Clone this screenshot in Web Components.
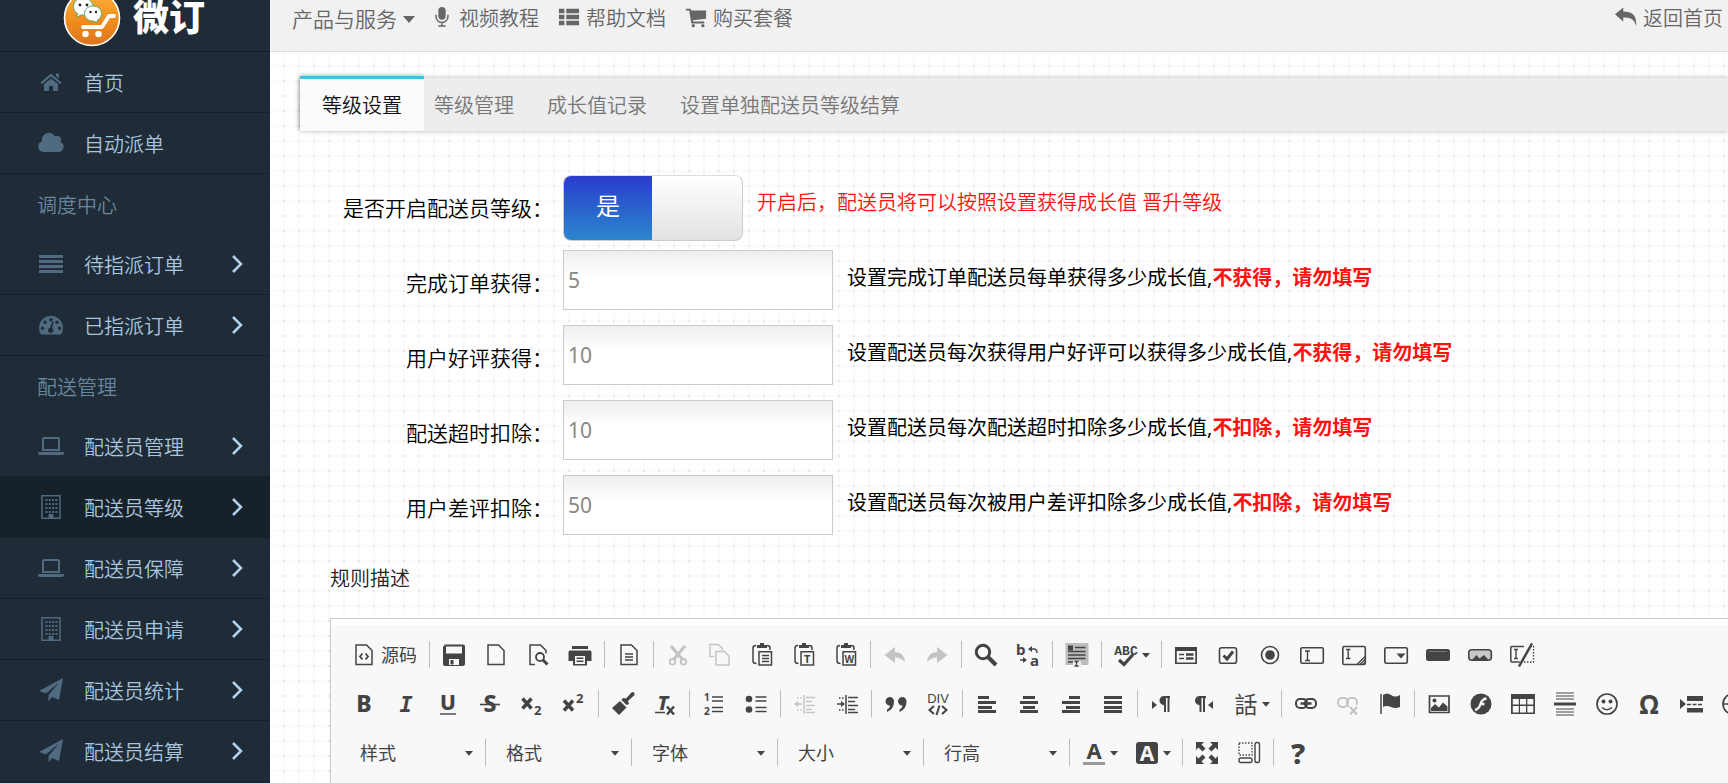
<!DOCTYPE html>
<html lang="zh-CN">
<head>
<meta charset="utf-8">
<meta name="viewport" content="width=device-width, initial-scale=1">
<title>微订 - 配送员等级</title>
<style>
  body {
    margin: 0;
    font-family: "Noto Sans", "Noto Sans CJK SC", sans-serif;
    font-size: 20px;
    font-weight: 350;
    overflow-x: hidden;
  }
</style>
</head>
<body>
<wd-app>
  <wd-sidebar slot="side">
    <wd-nav-item icon="home">首页</wd-nav-item>
    <wd-nav-item icon="cloud">自动派单</wd-nav-item>
    <wd-nav-title>调度中心</wd-nav-title>
    <wd-nav-item icon="bars" more>待指派订单</wd-nav-item>
    <wd-nav-item icon="gauge" more>已指派订单</wd-nav-item>
    <wd-nav-title>配送管理</wd-nav-title>
    <wd-nav-item icon="laptop" more>配送员管理</wd-nav-item>
    <wd-nav-item icon="building" more active>配送员等级</wd-nav-item>
    <wd-nav-item icon="laptop" more>配送员保障</wd-nav-item>
    <wd-nav-item icon="building" more>配送员申请</wd-nav-item>
    <wd-nav-item icon="plane" more>配送员统计</wd-nav-item>
    <wd-nav-item icon="plane" more>配送员结算</wd-nav-item>
  </wd-sidebar>
  <wd-topbar slot="top"></wd-topbar>
  <wd-tabs>
    <wd-tab active>等级设置</wd-tab>
    <wd-tab>等级管理</wd-tab>
    <wd-tab>成长值记录</wd-tab>
    <wd-tab>设置单独配送员等级结算</wd-tab>
  </wd-tabs>
  <wd-form>
    <wd-switch-row label="是否开启配送员等级：">开启后，配送员将可以按照设置获得成长值 晋升等级</wd-switch-row>
    <wd-field-row label="完成订单获得：" value="5" warn="不获得，请勿填写">设置完成订单配送员每单获得多少成长值,</wd-field-row>
    <wd-field-row label="用户好评获得：" value="10" warn="不获得，请勿填写">设置配送员每次获得用户好评可以获得多少成长值,</wd-field-row>
    <wd-field-row label="配送超时扣除：" value="10" warn="不扣除，请勿填写">设置配送员每次配送超时扣除多少成长值,</wd-field-row>
    <wd-field-row label="用户差评扣除：" value="50" warn="不扣除，请勿填写">设置配送员每次被用户差评扣除多少成长值,</wd-field-row>
  </wd-form>
  <wd-editor>规则描述</wd-editor>
</wd-app>

<script>
const S = (d, w = 1.5) => `<path d="${d}" fill="none" stroke="currentColor" stroke-width="${w}"/>`;
const F = d => `<path d="${d}" fill="currentColor"/>`;
const T = (x, y, size, text, extra = '', family = 'Noto Sans, Noto Sans CJK SC, sans-serif') =>
  `<text x="${x}" y="${y}" font-size="${size}" font-family="${family}" fill="currentColor" ${extra}>${text}</text>`;
const CLIP = S('M6.5 20.5Q3 20.500 3 18V5Q3 2.500 6 2.500M17 2.500Q20 2.500 20 5V7') + F('M7 5V2h3V0h4v2h3v3z');

const ICONS = {
  /* sidebar */
  home: F('M12 3.500L22.500 12.500 21 14 12 6.500 3 14 1.500 12.500zM17 3.500h3v5l-3-2.500zM5 14l7-5.500 7 5.500v7h-5v-5h-4v5H5z'),
  cloud: F('M4.500 21A5.500 5.500 0 0 1 3 10.300 7 7 0 0 1 16 5.500 4 4 0 0 1 21.500 11 5.300 5.300 0 0 1 20.500 21z'),
  bars: F('M0 3h24v3H0zM0 8h24v3H0zM0 13h24v3H0zM0 18h24v3H0z'),
  gauge: `<path fill="currentColor" fill-rule="evenodd" d="M2 21.500A12 12 0 1 1 22 21.500zM3.500 13.500a1.700 1.700 0 1 0 0 3.400 1.700 1.700 0 0 0 0-3.400zM6 7.500a1.700 1.700 0 1 0 0 3.400 1.700 1.700 0 0 0 0-3.400zM12 5a1.700 1.700 0 1 0 0 3.400A1.700 1.700 0 0 0 12 5zM18 7.500a1.700 1.700 0 1 0 0 3.400 1.700 1.700 0 0 0 0-3.400zM20.500 13.500a1.700 1.700 0 1 0 0 3.400 1.700 1.700 0 0 0 0-3.400zM14.700 9l-1.600 6a2.700 2.700 0 1 1-2-.3L13.300 8.600z"/>`,
  laptop: S('M5 4h14q1 0 1 1v11H4V5q0-1 1-1z', 2) + F('M-1 18h26v1q0 2-2 2H1q-2 0-2-2z'),
  building: S('M3 .8h18v22.400H3z', 1.500) + `<path d="M6.500 5h12M6.500 9h12M6.500 13h12M6.500 17h12" stroke="currentColor" stroke-width="2" stroke-dasharray="2 1.300" fill="none"/>` + F('M9.500 19h5v4h-5z'),
  plane: F('M24 0L20 22l-7-3-3.500 4.500V17L20 4.500 7 15.500 0 13z'),
  /* top bar */
  mic: F('M12 1a4 4 0 0 1 4 4v6a4 4 0 0 1-8 0V5a4 4 0 0 1 4-4z') + S('M5.500 9.500v2a6.500 6.500 0 0 0 13 0v-2M12 18v3.500M8 21.700h8', 1.600),
  list: F('M1 3h6v5H1zM9 3h14v5H9zM1 9.500h6v5H1zM9 9.500h14v5H9zM1 16h6v5H1zM9 16h14v5H9z'),
  cart: F('M1 3h5l1 2h16v9L8.500 15.500 9 17h12v2H7L4.500 5H1z') + '<circle cx="9" cy="21.500" r="1.800" fill="currentColor"/><circle cx="19.500" cy="21.500" r="1.800" fill="currentColor"/>',
  reply: F('M0 9l9-7.500V6c10 0 15 4 14 16-1.500-7-5-9.500-14-9.500V17z'),
  chev: S('M7 4l8 8-8 8', 2.5),
  /* editor */
  source: S('M4 2h10.500L20 7.500V21.500H4z') + S('M10.500 10.500L8 13.500l2.500 3M13.500 10.500l2.500 3-2.500 3', 1.800),
  save: '<path fill="currentColor" fill-rule="evenodd" d="M3 1.500h18q2 0 2 2V21q0 2-2 2H3q-2 0-2-2V4zM4 3.500v7h16v-7zM7 16v6h10v-6zM8.500 17h3v4.500h-3z"/>',
  page: S('M4 2h10.500L20 7.500V21.500H4z'),
  preview: S('M9 21.500H4V2h10.500L20 7.500v3') + '<circle cx="14" cy="14" r="4" fill="none" stroke="currentColor" stroke-width="1.800"/>' + S('M17 17l4.500 4.500', 3),
  print: '<path fill="currentColor" fill-rule="evenodd" d="M4 3h16v3H4zM2 7.500h20q1.500 0 1.500 1.500v9H19v4.500H5V18H.5V9Q.5 7.500 2 7.500zM7 13v8h10v-8zM8.500 14.500h7V16h-7zM8.500 17.500h7V19h-7z"/>',
  doc: S('M4 2h10.500L20 7.500V21.500H4z') + S('M8 11h8M8 14h8M8 17h8', 1.400),
  cut: S('M5 3l11 13M19 3L8 16', 3.2) + '<circle cx="6.500" cy="18.800" r="2.800" fill="none" stroke="currentColor" stroke-width="1.800"/><circle cx="17.500" cy="18.800" r="2.800" fill="none" stroke="currentColor" stroke-width="1.800"/>',
  copy: S('M6 13.500H2V1.500h8L14 5v2') + S('M8 8.500h8.500l4.500 4.500v9H8z'),
  paste: CLIP + S('M9 8.800h12.500V22H9zM12 12.500h7M12 15.500h7M12 18.500h7', 1.500),
  pasteT: CLIP + S('M9 8.800h12.500V22H9z') + T(15.3, 20, 11, 'T', 'text-anchor="middle" font-weight="700"'),
  pasteW: CLIP + S('M9 8.800h12.500V22H9z') + T(15.3, 19.500, 10, 'W', 'text-anchor="middle" font-weight="700"'),
  undo: F('M1.500 12L12 4v5q9 0 10 10-4-4.500-10-4.500V20z'),
  redo: F('M22.500 12L12 4v5q-9 0-10 10 4-4.500 10-4.500V20z'),
  find: '<circle cx="9" cy="9" r="6.700" fill="none" stroke="currentColor" stroke-width="3"/>' + S('M14 14l8 8', 4),
  replace: T(0, 12, 15, 'b', 'font-weight="700"') + T(14, 23, 15, 'a', 'font-weight="700"') + S('M14 6h4q3 0 3 4M4 17h6', 1.500) + F('M12 6l4-3v6zM11 17l-4-3v6z'),
  selectall: '<path d="M.5 0h23v22H.5z" fill="#bdbdbd"/>' + S('M3 8.500h17.500M3 12h17.500M3 15.500h17.500M3 19h7M10 4.500h10.500', 1.600) + F('M3 2.500h5v5H3z') + '<path d="M8 18h8v6H8z" fill="#eee"/>' + S('M9.500 18.500h4M11.500 18.500v5M9.500 23h4', 1.400),
  spell: T(12, 12, 13, 'ABC', 'text-anchor="middle" font-weight="700"', 'Liberation Mono, monospace') + S('M5 17l5 4.500L19 11.500', 3.200),
  form: '<path fill="currentColor" fill-rule="evenodd" d="M1 4h22v17H1zM2.800 8v11.500h18.500V8z"/>' + S('M5 11.500h5M5 15.500h5', 1.500) + S('M12 11.500h7.500M12 15.500h7.500', 2.500),
  check: '<rect x="3.500" y="4.800" width="17" height="15.500" rx="2" fill="none" stroke="currentColor" stroke-width="1.600"/>' + S('M7.500 12.500l3.500 3.500 6-7.500', 3),
  radio: '<circle cx="12" cy="12" r="8.500" fill="none" stroke="currentColor" stroke-width="1.600"/><circle cx="12" cy="12" r="4.800" fill="currentColor"/>',
  textfield: '<rect x=".8" y="4.800" width="22.500" height="15.500" rx="1.500" fill="none" stroke="currentColor" stroke-width="1.600"/>' + S('M5 8h5M7.500 8v9.500M5 17.500h5', 1.400),
  textarea: '<rect x=".8" y="3.500" width="22.500" height="18" rx="1.500" fill="none" stroke="currentColor" stroke-width="1.600"/>' + S('M4 6.500h4.500M6.200 6.500v9M4 15.500h4.500', 1.400) + S('M15 21.500l8-8M18 21.500l5-5M21 21.500l2-2', 1.300),
  select: '<rect x=".8" y="4.800" width="22.500" height="15.500" rx="1.500" fill="none" stroke="currentColor" stroke-width="1.600"/>' + F('M12.500 10.500h9L17 15.500z'),
  button: '<rect x="0" y="6" width="24" height="12" rx="2.500" fill="currentColor"/>' + '<path d="M3 8.500h18" stroke="#777" stroke-width="1"/>',
  imgbutton: '<rect x=".8" y="6.800" width="22.500" height="10.500" rx="3" fill="#c8c8c8" stroke="currentColor" stroke-width="1.600"/>' + F('M4 17l4.500-5 3 3.500 4.500-3.500 4.500 5z'),
  hidden: S('M14 3.500H2q-1.200 0-1.200 1.200V18q0 1 1 1h8') + S('M4 6.500h4M6 6.500v9M4 15.500h4', 1.400) + S('M22 .5L9 23.500', 2.500) + '<path d="M20 3.500h3.500V19H13" fill="none" stroke="currentColor" stroke-width="1.400" stroke-dasharray="1.500 1.500"/>',
  bold: T(12, 20, 23, 'B', 'text-anchor="middle" font-weight="800"'),
  italic: T(12, 20, 22, 'I', 'text-anchor="middle" font-weight="700" font-style="italic"', 'DejaVu Sans Mono, monospace'),
  under: T(12, 18, 21, 'U', 'text-anchor="middle" font-weight="800"') + S('M4 22h16', 1.400),
  strike: T(12, 20, 23, 'S', 'text-anchor="middle" font-weight="800"') + S('M2 12.500h20', 1.600),
  sub: S('M2.500 6.500l9 10M11.500 6.500l-9 10', 3.400) + T(14, 23, 13, '2', 'font-weight="700"'),
  sup: S('M2 8.500l9 10M11 8.500l-9 10', 3.400) + T(14, 11, 13, '2', 'font-weight="700"'),
  brush: F('M21 0q3 0 2.500 3L17 9l1 3-2.500 1L10.500 8l1.500-2 3 .5zM9 9l6.500 6.500L8 23 1 16z'),
  clean: T(10, 18, 20, 'T', 'text-anchor="middle" font-weight="800" font-style="italic"') + S('M2 20.500h10', 1.500) + S('M14 14.500l7 8M21 14.500l-7 8', 2.400),
  ol: T(2, 9, 10, '1', 'font-weight="700"') + T(2, 23, 10, '2', 'font-weight="700"') + S('M10 5h11M10 9h11M10 15.500h11M10 19.500h11', 1.500),
  ul: '<circle cx="5" cy="7" r="3.300" fill="currentColor"/><circle cx="5" cy="17.500" r="3.300" fill="currentColor"/>' + S('M11.500 5h11M11.500 9h11M11.500 15.500h11M11.500 19.500h11', 1.500),
  outdent: S('M11 3v19M13 5.500h9M13 9.500h6M13 13.500h9M13 17.500h6M13 20.500h9', 1.500) + S('M2 12h7', 1.500) + F('M1 12l4-3v6z') + '<path d="M4 6h6M4 18h6" stroke="currentColor" stroke-width="1.500" stroke-dasharray="1.500 1.500"/>',
  indent: S('M11 3v19M13 5.500h10M13 9.500h7M13 13.500h10M13 17.500h7M13 20.500h10', 1.500) + S('M2 12h6', 1.500) + F('M10 12L6 9v6z') + '<path d="M4 6h6M4 18h6" stroke="currentColor" stroke-width="1.500" stroke-dasharray="1.500 1.500"/>',
  quote: F('M5.500 5A4.200 4.200 0 0 1 10 9.500Q10 17 3 20V17.500Q6 16 6 13.500A4.200 4.200 0 1 1 5.500 5zM18 5a4.200 4.200 0 0 1 4.500 4.500q0 7.500-7 10.500V17.500q3-1.500 3-4A4.200 4.200 0 1 1 18 5z'),
  div: T(12, 11, 13, 'DIV', 'text-anchor="middle" font-weight="400"', 'Liberation Sans, sans-serif') + S('M8 14l-4.500 4L8 22M16 14l4.500 4L16 22M13.500 13.500l-3 9.500', 2),
  left: F('M3 4h11v3H3zM3 9h18v3H3zM3 14h14v3H3zM3 18h18v3H3z'),
  center: F('M6 4h12v3H6zM3 9h18v3H3zM6 14h12v3H6zM3 18h18v3H3z'),
  right: F('M10 4h11v3H10zM3 9h18v3H3zM7 14h14v3H7zM3 18h18v3H3z'),
  justify: F('M3 4h18v3H3zM3 9h18v3H3zM3 14h18v3H3zM3 18h18v3H3z'),
  ltr: F('M2 9l5 4-5 4z') + F('M20 4H14a4.500 4.500 0 0 0 0 9v7h2V6h1.500v14h2V6H20z'),
  rtl: F('M21 9l-5 4 5 4z') + F('M14 4H7.500a4.500 4.500 0 0 0 0 9v7h2V6H11v14h2V6h1z'),
  lang: T(12, 21, 23, '話', 'text-anchor="middle" font-weight="400"'),
  link: '<rect x="2" y="7" width="11" height="9" rx="4" fill="none" stroke="currentColor" stroke-width="2"/><rect x="11" y="7" width="11" height="9" rx="4" fill="none" stroke="currentColor" stroke-width="2"/>' + S('M6.500 11.500h11', 2.500),
  unlink: '<rect x="2" y="6" width="10" height="9" rx="4" fill="none" stroke="currentColor" stroke-width="2"/><rect x="11" y="6" width="10" height="9" rx="4" fill="none" stroke="currentColor" stroke-width="2"/><path d="M13 13h11v10H13z" fill="#f8f8f8"/>' + S('M14 15l7 7.500M21 15l-7 7.500', 2.200),
  flag: S('M3 2v20', 1.500) + F('M5 3q4-3 8 0t9 0v12q-4.500 2-9 0t-8 0z'),
  image: S('M2.500 4h19.500v16.500H2.500z', 1.700) + '<circle cx="7.500" cy="8.500" r="2" fill="currentColor"/>' + F('M4 19v-3l4-4 4 3.500 4-5 4.500 4V19z'),
  flash: '<circle cx="12" cy="12" r="10.500" fill="currentColor"/><path d="M6 18q4-1 5.500-6t6-5.500M11 12h4.500" fill="none" stroke="#f8f8f8" stroke-width="2.400"/>',
  table: '<path fill="currentColor" fill-rule="evenodd" d="M0 2h24v20H0zM1.800 7v5.500h6V7zM9 7v5.500h6V7zM16.300 7v5.500h6V7zM1.800 14v6.500h6V14zM9 14v6.500h6V14zM16.300 14v6.500h6V14z"/>',
  hr: S('M3 1h18M3 4h18M3 7h18M3 17h18M3 20h18M3 23h18', 1) + F('M1 10.500h22v3H1z'),
  smile: '<circle cx="12" cy="12" r="10" fill="none" stroke="currentColor" stroke-width="1.700"/><circle cx="8.500" cy="9.500" r="2" fill="currentColor"/><circle cx="15.500" cy="9.500" r="2" fill="currentColor"/>' + S('M7 15.500q5 4.500 10 0', 1.600),
  omega: T(12, 22, 26, 'Ω', 'text-anchor="middle" font-weight="700"'),
  pagebreak: F('M1 7l6 5-6 5zM8 4h16v5H8zM8 16h16v4.500H8z') + '<path d="M8 12.500h16" stroke="currentColor" stroke-width="1.600" stroke-dasharray="4 1.500"/>',
  globe: '<circle cx="12" cy="12" r="10" fill="none" stroke="currentColor" stroke-width="1.700"/>' + S('M2 12h20M12 2q-9 10 0 20M12 2q9 10 0 20', 1.400),
  color: T(12, 18, 22, 'A', 'text-anchor="middle" font-weight="700"') + '<path d="M1 21h22v3H1z" fill="#999"/>',
  bgcolor: '<rect x="1" y="1" width="22" height="22" rx="3" fill="currentColor"/><g style="color:#f8f8f8">' + T(12, 20, 21, 'A', 'text-anchor="middle" font-weight="700"') + '</g>',
  max: F('M1 1h8L6.500 3.500l4 4-3 3-4-4L1 9zM23 1v8l-2.500-2.500-4 4-3-3 4-4L15 1zM1 23v-8l2.500 2.500 4-4 3 3-4 4L9 23zM23 23h-8l2.500-2.500-4-4 3-3 4 4L23 15z'),
  blocks: '<path d="M2 2h13v12H2z" fill="none" stroke="currentColor" stroke-width="1.400" stroke-dasharray="1.500 1.500"/><rect x="2" y="17" width="13" height="4.500" rx="2" fill="none" stroke="currentColor" stroke-width="1.400"/><rect x="18" y="1.500" width="4.500" height="20" rx="2" fill="none" stroke="currentColor" stroke-width="1.400"/>',
  about: T(12, 23, 29, '?', 'text-anchor="middle" font-weight="800"'),
  caret: F('M0 0h24L12 14z')
};

function define(name, html, ready) {
  const template = document.createElement('template');
  template.innerHTML = html;
  customElements.define(name, class extends HTMLElement {
    connectedCallback() {
      if (this.shadowRoot) return;
      const root = this.attachShadow({ mode: 'open' });
      root.append(template.content.cloneNode(true));
      if (ready) ready(this, root);
    }
  });
}

customElements.define('wd-icon', class extends HTMLElement {
  static observedAttributes = ['name'];
  constructor() {
    super();
    this.attachShadow({ mode: 'open' }).innerHTML = `<style>
      :host { display: block; width: 24px; height: 24px; flex: none; }
      svg { display: block; width: 100%; height: 100%; overflow: visible; }
    </style><svg viewBox="0 0 24 24" aria-hidden="true"></svg>`;
  }
  attributeChangedCallback(_, __, name) {
    this.shadowRoot.querySelector('svg').innerHTML = ICONS[name] || '';
  }
});

define('wd-app', `<style>
  :host { display: flex; align-items: stretch; min-height: 100vh; }
  aside { flex: none; width: 270px; background: #1f2b36; }
  main { flex: 1; min-width: 0; display: flex; flex-direction: column; overflow: hidden; }
  .page {
    --line: #fbfbfb;
    flex: 1; display: flex; flex-direction: column; padding: 26px 0 0 30px;
    background-color: #fff;
    background-image:
      radial-gradient(circle at 14px 14px, #e8e8e8 0 1px, transparent 1px),
      linear-gradient(90deg, transparent 13px, var(--line) 13px 15px, transparent 15px),
      linear-gradient(transparent 13px, var(--line) 13px 15px, transparent 15px);
    background-size: 15px 15px;
  }
</style>
<aside><slot name="side"></slot></aside>
<main><slot name="top"></slot><div class="page"><slot></slot></div></main>`);

define('wd-sidebar', `<style>
  :host { display: block; color: #a9c4dd; }
  header {
    box-sizing: border-box; height: 52px; padding: 0 0 16px 63px;
    display: flex; align-items: center; gap: 12px; border-bottom: 1px solid #17202a;
  }
  svg { flex: none; width: 58px; height: 58px; }
  h1 { margin: 0; font-size: 36px; line-height: 32px; font-weight: 900; color: #fff; }
</style>
<header>
  <svg viewBox="0 0 58 58" aria-hidden="true">
    <defs><linearGradient id="g" x1="0" y1="0" x2="0" y2="1"><stop offset="0" stop-color="#f9b33a"/><stop offset=".6" stop-color="#ef8a1d"/><stop offset="1" stop-color="#dd7420"/></linearGradient></defs>
    <circle cx="29" cy="29" r="27.500" fill="url(#g)" stroke="#fff" stroke-width="1.600"/>
    <g fill="#fff" stroke="#48a860" stroke-width=".9">
      <path d="M20 9c-6 0-9.500 4-9.500 8.500 0 3 1.500 5.500 4 7l-.5 3.500 4-2c8 1 12-4 12-8.500S26 9 20 9z"/>
      <path d="M30 17c-5 0-8.500 3.500-8.500 7.500S25 32 30 32l4 1.500.5-2.500c2.500-1.500 4-3.500 4-6.500 0-4-3.500-7.500-8.500-7.500z"/>
    </g>
    <g fill="#222"><circle cx="17" cy="16" r="1.400"/><circle cx="24" cy="16" r="1.400"/><circle cx="27.500" cy="23" r="1.200"/><circle cx="33" cy="23" r="1.200"/></g>
    <path d="M20 38h19l7-11h5" fill="none" stroke="#fff" stroke-width="3.800" stroke-linecap="round" stroke-linejoin="round"/>
    <circle cx="22.500" cy="45" r="3.200" fill="#fff"/><circle cx="35.500" cy="45" r="3.200" fill="#fff"/>
  </svg>
  <h1>微订</h1>
</header>
<nav><slot></slot></nav>`);

define('wd-nav-item', `<style>
  :host { display: block; border-bottom: 1px solid #17202a; }
  :host([active]) { background: #17212a; }
  a { display: flex; align-items: center; height: 60px; padding: 0 20px 0 39px; color: inherit; text-decoration: none; }
  span { flex: 1; padding: 4px 0 0 21px; line-height: 30px; white-space: nowrap; }
  .lead { color: #506b80; }
  .more { color: #b0d2f0; }
</style><a href="#"><wd-icon class="lead"></wd-icon><span><slot></slot></span></a>`, (host, root) => {
  root.querySelector('.lead').setAttribute('name', host.getAttribute('icon'));
  if (host.hasAttribute('more'))
    root.querySelector('a').insertAdjacentHTML('beforeend', '<wd-icon class="more" name="chev"></wd-icon>');
});

define('wd-nav-title', `<style>
  :host { display: block; padding: 4px 37px 0; line-height: 56px; color: #68879f; }
</style><slot></slot>`);

define('wd-topbar', `<style>
  :host { display: block; background: #f1f1f1; border-bottom: 1px solid #ddd; color: #666; }
  nav { display: flex; align-items: center; height: 51px; padding: 0 5px 13px 22px; box-sizing: border-box; }
  a { display: flex; align-items: center; gap: 6px; color: inherit; text-decoration: none; line-height: 30px; white-space: nowrap; }
  .menu { font-size: 21px; }
  .menu wd-icon { width: 12px; height: 12px; padding-top: 6px; }
  .small { width: 22px; height: 22px; padding-bottom: 4px; }
  .links { display: flex; gap: 19px; margin-left: 16px; }
  .back { margin-left: auto; }
</style>
<nav>
  <a class="menu" href="#">产品与服务<wd-icon name="caret"></wd-icon></a>
  <div class="links">
    <a href="#"><wd-icon class="small" name="mic"></wd-icon>视频教程</a>
    <a href="#"><wd-icon class="small" name="list"></wd-icon>帮助文档</a>
    <a href="#"><wd-icon class="small" name="cart"></wd-icon>购买套餐</a>
  </div>
  <a class="back" href="#"><wd-icon class="small" name="reply"></wd-icon>返回首页</a>
</nav>`);

define('wd-tabs', `<style>
  :host {
    display: flex; align-items: flex-end; gap: 33px; height: 53px;
    background: #ededed; box-shadow: 0 0 5px rgba(0, 0, 0, .3);
  }
</style><slot></slot>`);

define('wd-tab', `<style>
  :host { display: block; color: #777; }
  :host([active]) { margin-right: -23px; background: #fbfbfb; border-top: 3px solid #43bee5; box-shadow: 0 0 5px rgba(0, 0, 0, .3); clip-path: inset(-6px 0 0 -6px); color: #111; }
  a { display: block; padding-top: 2px; line-height: 50px; color: inherit; text-decoration: none; white-space: nowrap; }
  :host([active]) a { padding: 2px 22px 0; }
</style><a href="#"><slot></slot></a>`);

define('wd-form', `<style>
  :host { display: flex; flex-direction: column; gap: 9px; padding-top: 44px; }
</style><slot></slot>`);

const ROW = `
  :host { display: flex; align-items: flex-start; color: #000; min-height: 66px; }
  .name { flex: none; width: 253px; margin-right: 10px; text-align: right; font-size: 21px; line-height: 66px; white-space: nowrap; }
  .hint { margin-left: 14px; line-height: 56px; white-space: nowrap; }`;

define('wd-switch-row', `<style>${ROW}
  .switch { position: relative; display: flex; width: 180px; height: 66px; box-sizing: border-box; border: 1px solid #ccc; border-top-color: #ddd; border-radius: 8px; overflow: hidden; background: linear-gradient(#fff, #e2e2e2); cursor: pointer; }
  .switch input { position: absolute; inset: 0; width: 100%; height: 100%; margin: 0; opacity: 0; }
  .on { flex: none; width: 88px; line-height: 60px; text-align: center; font-size: 24px; font-weight: 400; color: #fff; background: linear-gradient(#2a3ccd, #2b87cd); }
  .hint { color: #f11; }
</style>
<label class="name" for="s"></label>
<div class="switch"><span class="on">是</span><input id="s" type="checkbox" role="switch" checked></div>
<span class="hint"><slot></slot></span>`, (host, root) => {
  root.querySelector('.name').textContent = host.getAttribute('label');
});

define('wd-field-row', `<style>${ROW}
  .hint { font-weight: 400; }
  input { box-sizing: border-box; flex: none; width: 270px; height: 60px; padding: 0 4px; border: 1px solid #ccc; border-radius: 0; outline: 0; background: linear-gradient(#eee, #fff 26px); font: 400 21px "Noto Sans", sans-serif; color: #888; }
  strong { font-weight: 700; color: #f11; }
</style>
<label class="name" for="f"></label>
<input id="f" type="text">
<span class="hint"><slot></slot><strong></strong></span>`, (host, root) => {
  root.querySelector('.name').textContent = host.getAttribute('label');
  root.querySelector('input').value = host.getAttribute('value');
  root.querySelector('strong').textContent = host.getAttribute('warn');
});

define('wd-tool', `<style>
  :host { display: block; flex: none; color: #444; }
  :host([off]) { color: #c4c4c4; }
  button { display: flex; align-items: center; height: 37px; padding: 0 9px; border: 0; background: none; color: inherit; font: 400 18px/24px "Noto Sans CJK SC", sans-serif; white-space: nowrap; }
  .text { padding: 0 0 2px 5px; }
  .text:empty { display: none; }
  .drop { width: 8px; height: 8px; padding: 4px 0 0 4px; margin-right: -1px; }
</style><button type="button"><wd-icon></wd-icon><span class="text"></span></button>`, (host, root) => {
  const name = host.getAttribute('name');
  root.querySelector('wd-icon').setAttribute('name', name);
  root.querySelector('.text').textContent = host.getAttribute('text') || '';
  root.querySelector('button').setAttribute('aria-label', host.getAttribute('text') || name);
  if (host.hasAttribute('drop'))
    root.querySelector('button').insertAdjacentHTML('beforeend', '<wd-icon class="drop" name="caret"></wd-icon>');
});

define('wd-sep', `<style>
  :host { display: block; flex: none; box-sizing: border-box; width: 7px; height: 27px; padding: 0 3px; }
  i { display: block; height: 100%; background: #bcbcbc; }
</style><i></i>`);

define('wd-combo', `<style>
  :host { display: grid; flex: none; width: 139px; align-items: center; }
  select { grid-area: 1 / 1; width: 100%; height: 37px; padding: 0 17px 2px; border: 0; outline: 0; appearance: none; background: none; color: #444; font: 400 18px "Noto Sans CJK SC", sans-serif; }
  wd-icon { grid-area: 1 / 1; justify-self: end; width: 8px; height: 8px; margin-right: 9px; padding-top: 4px; color: #444; pointer-events: none; }
</style><select><option></option></select><wd-icon name="caret"></wd-icon>`, (host, root) => {
  root.querySelector('option').textContent = host.getAttribute('label');
  root.querySelector('select').setAttribute('aria-label', host.getAttribute('label'));
});

const TOOLS = [
  'source:源码 | save page preview print | doc | -cut -copy paste pasteT pasteW | -undo -redo | find replace | selectall | spell+ | form check radio textfield textarea select button imgbutton hidden',
  'bold italic under strike sub sup | brush clean | ol ul | -outdent indent | quote div | left center right justify | ltr rtl lang+ | link -unlink flag | image flash table hr smile omega pagebreak globe',
  '=样式 | =格式 | =字体 | =大小 | =行高 | color+ bgcolor+ | max blocks | about'
];
const tool = t => {
  if (t === '|') return '<wd-sep></wd-sep>';
  if (t[0] === '=') return `<wd-combo label="${t.slice(1)}"></wd-combo>`;
  const [, off, name, drop, text] = t.match(/^(-?)(\w+)(\+?)(?::(.+))?$/);
  return `<wd-tool name="${name}"${off && ' off'}${drop && ' drop'}${text ? ` text="${text}"` : ''}></wd-tool>`;
};

define('wd-editor', `<style>
  :host { flex: 1; display: flex; flex-direction: column; padding: 23px 0 0 30px; }
  h2 { margin: 0 0 24px; font-size: 20px; line-height: 30px; font-weight: 350; color: #222; }
  .frame { flex: 1; border: solid #ccc; border-width: 1px 0 0 1px; padding-top: 6px; background: #fff; }
  .bars { box-sizing: border-box; height: 100%; padding: 11px 0 0 12px; background: #f8f8f8; display: flex; flex-direction: column; gap: 12px; overflow: hidden; }
  .bar { display: flex; align-items: center; }
</style>
<h2><slot></slot></h2>
<div class="frame"><div class="bars">${TOOLS.map(row => `<div class="bar" role="toolbar">${row.split(' ').map(tool).join('')}</div>`).join('')}</div></div>`);
</script>
</body>
</html>
